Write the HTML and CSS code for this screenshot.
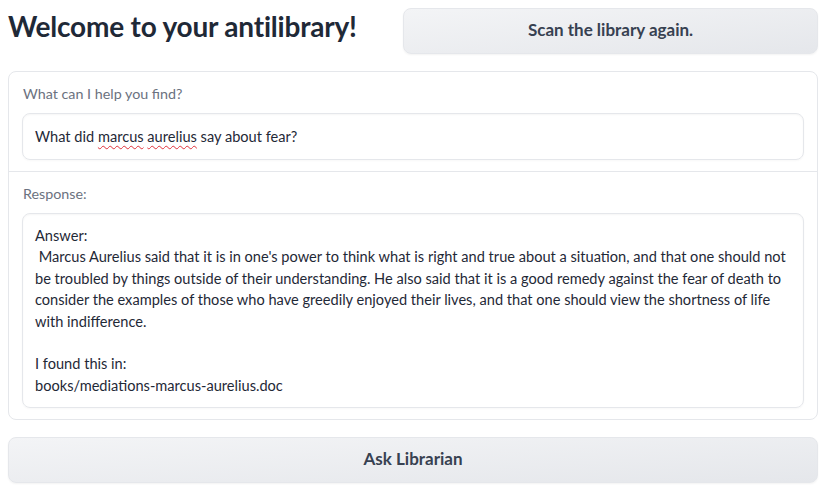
FILE: index.html
```html
<!DOCTYPE html>
<html>
<head>
<meta charset="utf-8">
<link rel="stylesheet" href="styles.css">
</head>
<body>
<div class="app">
  <div class="top-row">
    <div class="title-col"><h1 class="title">Welcome to your antilibrary!</h1></div>
    <button class="btn scan-btn">Scan the library again.</button>
  </div>
  <div class="block">
    <div class="section first">
      <div class="label">What can I help you find?</div>
      <div class="field query">What did <span class="misspelt">marcus</span> <span class="misspelt">aurelius</span> say about fear?</div>
    </div>
    <div class="section divided">
      <div class="label">Response:</div>
      <div class="field response">Answer:<br>&nbsp;Marcus Aurelius said that it is in one's power to think what is right and true about a situation, and that one should not be troubled by things outside of their understanding. He also said that it is a good remedy against the fear of death to consider the examples of those who have greedily enjoyed their lives, and that one should view the shortness of life with indifference.<br><br>I found this in:<br>books/mediations-marcus-aurelius.doc</div>
    </div>
  </div>
  <button class="btn ask-btn">Ask Librarian</button>
</div>
</body>
</html>
```
FILE: styles.css
```css
html, body {
  margin: 0;
  padding: 0;
  background: #ffffff;
}
body {
  font-family: Lato, "Noto Sans", sans-serif;
  color: #1f2937;
}
.app {
  padding: 8px 15px 8px 8px;
  display: flex;
  flex-direction: column;
}
.top-row {
  display: flex;
  gap: 8px;
  align-items: flex-start;
}
.title-col {
  flex: 1;
}
.title {
  margin: 0;
  padding-top: 0;
  font-size: 28px;
  line-height: 36px;
  font-weight: 700;
  color: #1f2937;
  letter-spacing: -0.2px;
}
.btn {
  font-family: Lato, "Noto Sans", sans-serif;
  font-weight: 700;
  font-size: 17px;
  line-height: 20px;
  color: #374151;
  background: linear-gradient(to bottom right, #f3f4f6, #e5e7eb);
  border: 1px solid #e5e7eb;
  border-radius: 8px;
  box-shadow: 0 1px 2px rgba(0,0,0,0.05);
  cursor: pointer;
  padding: 0 0 2px 0;
}
.scan-btn {
  width: 415px;
  height: 46px;
  flex: none;
}
.block {
  margin-top: 17px;
  border: 1px solid #e5e7eb;
  border-radius: 8px;
  display: flex;
  flex-direction: column;
}
.section {
  padding: 12px 13px 11px 13px;
  display: flex;
  flex-direction: column;
  gap: 9px;
}
.divided {
  border-top: 1px solid #e5e7eb;
}
.label {
  font-size: 14.3px;
  line-height: 20px;
  color: #6b7280;
  padding-left: 1px;
}
.field {
  border: 1px solid #e5e7eb;
  border-radius: 8px;
  box-shadow: inset 0 1px 2px rgba(0,0,0,0.04), 0 1px 2px rgba(0,0,0,0.03);
  padding: 12px 12px;
  font-size: 14.6px;
  line-height: 21px;
  color: #1f2937;
}
.response {
  padding: 11px 12px 11px 12px;
  line-height: 21.4px;
}
.misspelt {
  text-decoration: underline wavy #e0313a;
  text-decoration-thickness: 1px;
  text-underline-offset: 3px;
}
.ask-btn {
  margin-top: 17px;
  height: 46px;
  width: 100%;
}
```
